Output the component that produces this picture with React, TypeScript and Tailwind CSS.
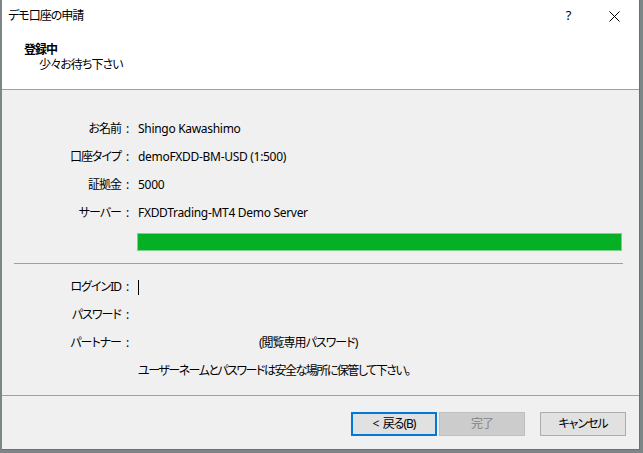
const font = { fontFamily: '"Noto Sans", "Noto Sans CJK JP", sans-serif' };

type Row = { label: string; value?: React.ReactNode };

function InfoRows({ rows }: { rows: Row[] }) {
  return (
    <div className="grid grid-cols-[119px_12px_1fr]">
      {rows.map((r, i) => (
        <div key={i} className="contents">
          <div className="h-[28px] flex items-center justify-end whitespace-nowrap">{r.label}</div>
          <div className="h-[28px] flex items-center justify-center">{r.label ? ':' : ''}</div>
          <div className="h-[28px] pl-[5px] flex items-center whitespace-nowrap">{r.value}</div>
        </div>
      ))}
    </div>
  );
}

function Latin({ children }: { children: React.ReactNode }) {
  return <span className="tracking-[-0.3px]">{children}</span>;
}

export default function App() {
  return (
    <div
      className="w-[643px] h-[453px] bg-[#7d8686] overflow-hidden text-[12px] text-black [font-feature-settings:'palt'] tracking-[-1px]"
      style={font}
    >
      <div className="ml-[2px] w-[638px] h-[450px] bg-[#f0f0f0] border-r border-b border-[#6f6f6f] flex flex-col">
        {/* title + header */}
        <div className="bg-white h-[90px] border-b border-[#a0a0a0] flex flex-col">
          <div className="h-[32px] flex items-center pl-[6px]">
            <span className="flex-1">デモ口座の申請</span>
            <span className="w-[46px] text-center text-[13px]">?</span>
            <span className="w-[46px] flex justify-center mr-[2px]">
              <svg width="11" height="11" viewBox="0 0 11 11" stroke="black" strokeWidth="1">
                <path d="M0.5 0.5 L10.5 10.5 M10.5 0.5 L0.5 10.5" />
              </svg>
            </span>
          </div>
          <div className="pl-[22px] mt-[10px] font-bold leading-[16px]">登録中</div>
          <div className="pl-[37px] leading-[16px] mt-[-1px]">少々お待ち下さい</div>
        </div>

        {/* body */}
        <div className="flex-1 flex flex-col pt-[25px]">
          <InfoRows
            rows={[
              { label: 'お名前', value: <Latin>Shingo Kawashimo</Latin> },
              { label: '口座タイプ', value: <Latin>demoFXDD-BM-USD (1:500)</Latin> },
              { label: '証拠金', value: <Latin>5000</Latin> },
              { label: 'サーバー', value: <Latin>FXDDTrading-MT4 Demo Server</Latin> },
            ]}
          />
          <div className="ml-[135px] mr-[17px] mt-[6px] h-[18px] bg-[#06b025] border border-[#7fd08f]" />
          <div className="ml-[12px] mr-[16px] mt-[12px] h-px bg-[#a0a0a0]" />
          <div className="mt-[9px]">
            <InfoRows
              rows={[
                { label: 'ログインID', value: <span className="w-px h-[15px] bg-black" /> },
                { label: 'パスワード' },
                { label: 'パートナー', value: <span className="pl-[121px]">(閲覧専用パスワード)</span> },
                {
                  label: '',
                  value: (
                    <span className="tracking-[-1.5px]">ユーザーネームとパスワードは安全な場所に保管して下さい。</span>
                  ),
                },
              ]}
            />
          </div>
        </div>

        {/* footer */}
        <div className="h-[54px] border-t border-[#a0a0a0] flex items-start pt-[16px] pr-[13px] justify-end">
          <button className="w-[86px] h-[24px] bg-[#e1e1e1] border-2 border-[#0078d7] flex items-center justify-center whitespace-pre">
            {'<  戻る(B)'}
          </button>
          <button className="ml-[2px] w-[86px] h-[24px] bg-[#cccccc] border border-[#bfbfbf] text-[#838383] flex items-center justify-center">
            完了
          </button>
          <button className="ml-[15px] w-[86px] h-[24px] bg-[#e1e1e1] border border-[#adadad] flex items-center justify-center">
            キャンセル
          </button>
        </div>
      </div>
    </div>
  );
}
